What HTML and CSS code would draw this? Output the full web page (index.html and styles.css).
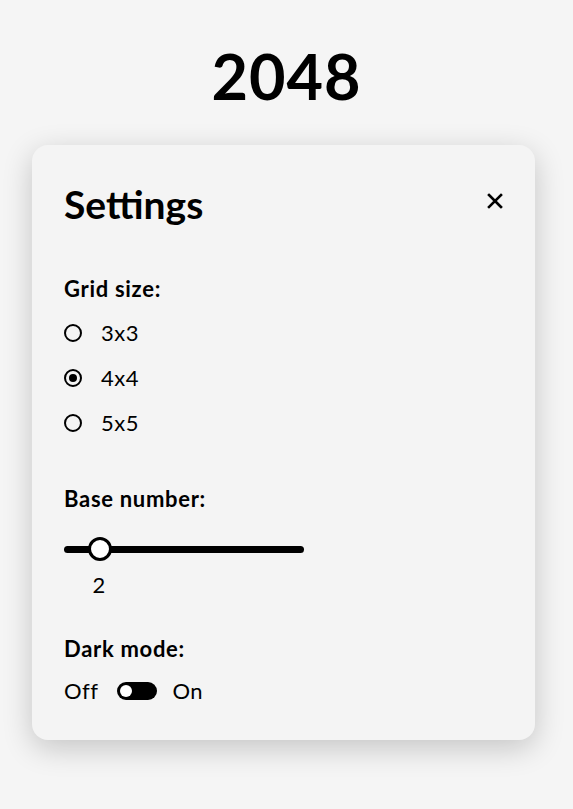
FILE: index.html
```html
<!DOCTYPE html>
<html>
<head>
<meta charset="utf-8">
<link rel="stylesheet" href="styles.css">
</head>
<body>
<h1 class="title">2048</h1>
<div class="panel">
  <div class="panel-head">
    <h2 class="panel-title">Settings</h2>
    <button class="close" aria-label="Close">
      <svg width="16" height="16" viewBox="0 0 16 16"><path d="M2 2L14 14M14 2L2 14" stroke="#000" stroke-width="2.6" stroke-linecap="square"/></svg>
    </button>
  </div>

  <div class="group">
    <div class="label">Grid size:</div>
    <div class="options">
      <div class="option"><span class="radio"></span><span>3x3</span></div>
      <div class="option"><span class="radio checked"></span><span>4x4</span></div>
      <div class="option"><span class="radio"></span><span>5x5</span></div>
    </div>
  </div>

  <div class="group base">
    <div class="label">Base number:</div>
    <div class="slider">
      <div class="track"></div>
      <div class="thumb"></div>
    </div>
    <div class="slider-value">2</div>
  </div>

  <div class="group dark">
    <div class="label">Dark mode:</div>
    <div class="toggle-row">
      <span>Off</span>
      <span class="toggle"><span class="knob"></span></span>
      <span>On</span>
    </div>
  </div>
</div>
</body>
</html>
```

FILE: styles.css
```css
html, body {
  margin: 0;
  padding: 0;
  background: #f5f5f5;
  font-family: Lato, "Noto Sans", sans-serif;
  color: #000;
}
body {
  min-height: 809px;
  padding-bottom: 1px;
  box-sizing: border-box;
}
.title {
  margin: 0;
  padding-top: 38px;
  height: 107px;
  box-sizing: border-box;
  text-align: center;
  font-size: 63px;
  line-height: 76px;
  font-weight: 700;
  letter-spacing: 1px;
}
.panel {
  width: 503px;
  margin-left: 32px;
  margin-top: 38px;
  box-sizing: border-box;
  background: #f4f4f4;
  border-radius: 16px;
  box-shadow: 0 8px 30px rgba(0,0,0,0.2);
  padding: 36px 32px 35px 32px;
}
.panel-head {
  display: flex;
  justify-content: space-between;
  align-items: center;
  height: 46px;
}
.panel-title {
  margin: 0;
  font-size: 39px;
  font-weight: 700;
  line-height: 46px;
}
.close {
  border: 0;
  background: none;
  padding: 0;
  margin-right: 0;
  margin-top: -6px;
  width: 16px;
  height: 16px;
  display: flex;
}
.group {
  margin-top: 49px;
}
.label {
  font-size: 22px;
  font-weight: 700;
  line-height: 26px;
  letter-spacing: 0.7px;
}
.options {
  display: flex;
  flex-direction: column;
  gap: 17px;
  margin-top: 17px;
}
.option {
  display: flex;
  align-items: center;
  gap: 19px;
  font-size: 22px;
  line-height: 28px;
  letter-spacing: 0.5px;
}
.radio {
  width: 18px;
  height: 18px;
  box-sizing: border-box;
  border: 2px solid #000;
  border-radius: 50%;
  display: inline-flex;
  align-items: center;
  justify-content: center;
}
.radio.checked::after {
  content: "";
  width: 8px;
  height: 8px;
  border-radius: 50%;
  background: #000;
}
.base {
  margin-top: 49px;
}
.slider {
  position: relative;
  width: 240px;
  height: 26px;
  margin-top: 24px;
  display: flex;
  align-items: center;
}
.track {
  width: 100%;
  height: 7px;
  border-radius: 4px;
  background: #000;
}
.thumb {
  position: absolute;
  left: 24px;
  top: 1px;
  width: 24px;
  height: 24px;
  box-sizing: border-box;
  border: 3.5px solid #000;
  background: #fff;
  border-radius: 50%;
}
.slider-value {
  width: 70px;
  text-align: center;
  font-size: 22px;
  line-height: 26px;
  margin-top: 10px;
}
.dark {
  margin-top: 38px;
}
.toggle-row {
  display: flex;
  align-items: center;
  gap: 21px;
  font-size: 22px;
  line-height: 28px;
  letter-spacing: 0.5px;
  margin-top: 15px;
}
.toggle {
  width: 40px;
  height: 18px;
  background: #000;
  border-radius: 9px;
  position: relative;
  display: inline-block;
  margin-left: -2px;
  margin-right: -6px;
}
.knob {
  position: absolute;
  left: 3px;
  top: 3px;
  width: 12px;
  height: 12px;
  background: #fff;
  border-radius: 50%;
}
```
